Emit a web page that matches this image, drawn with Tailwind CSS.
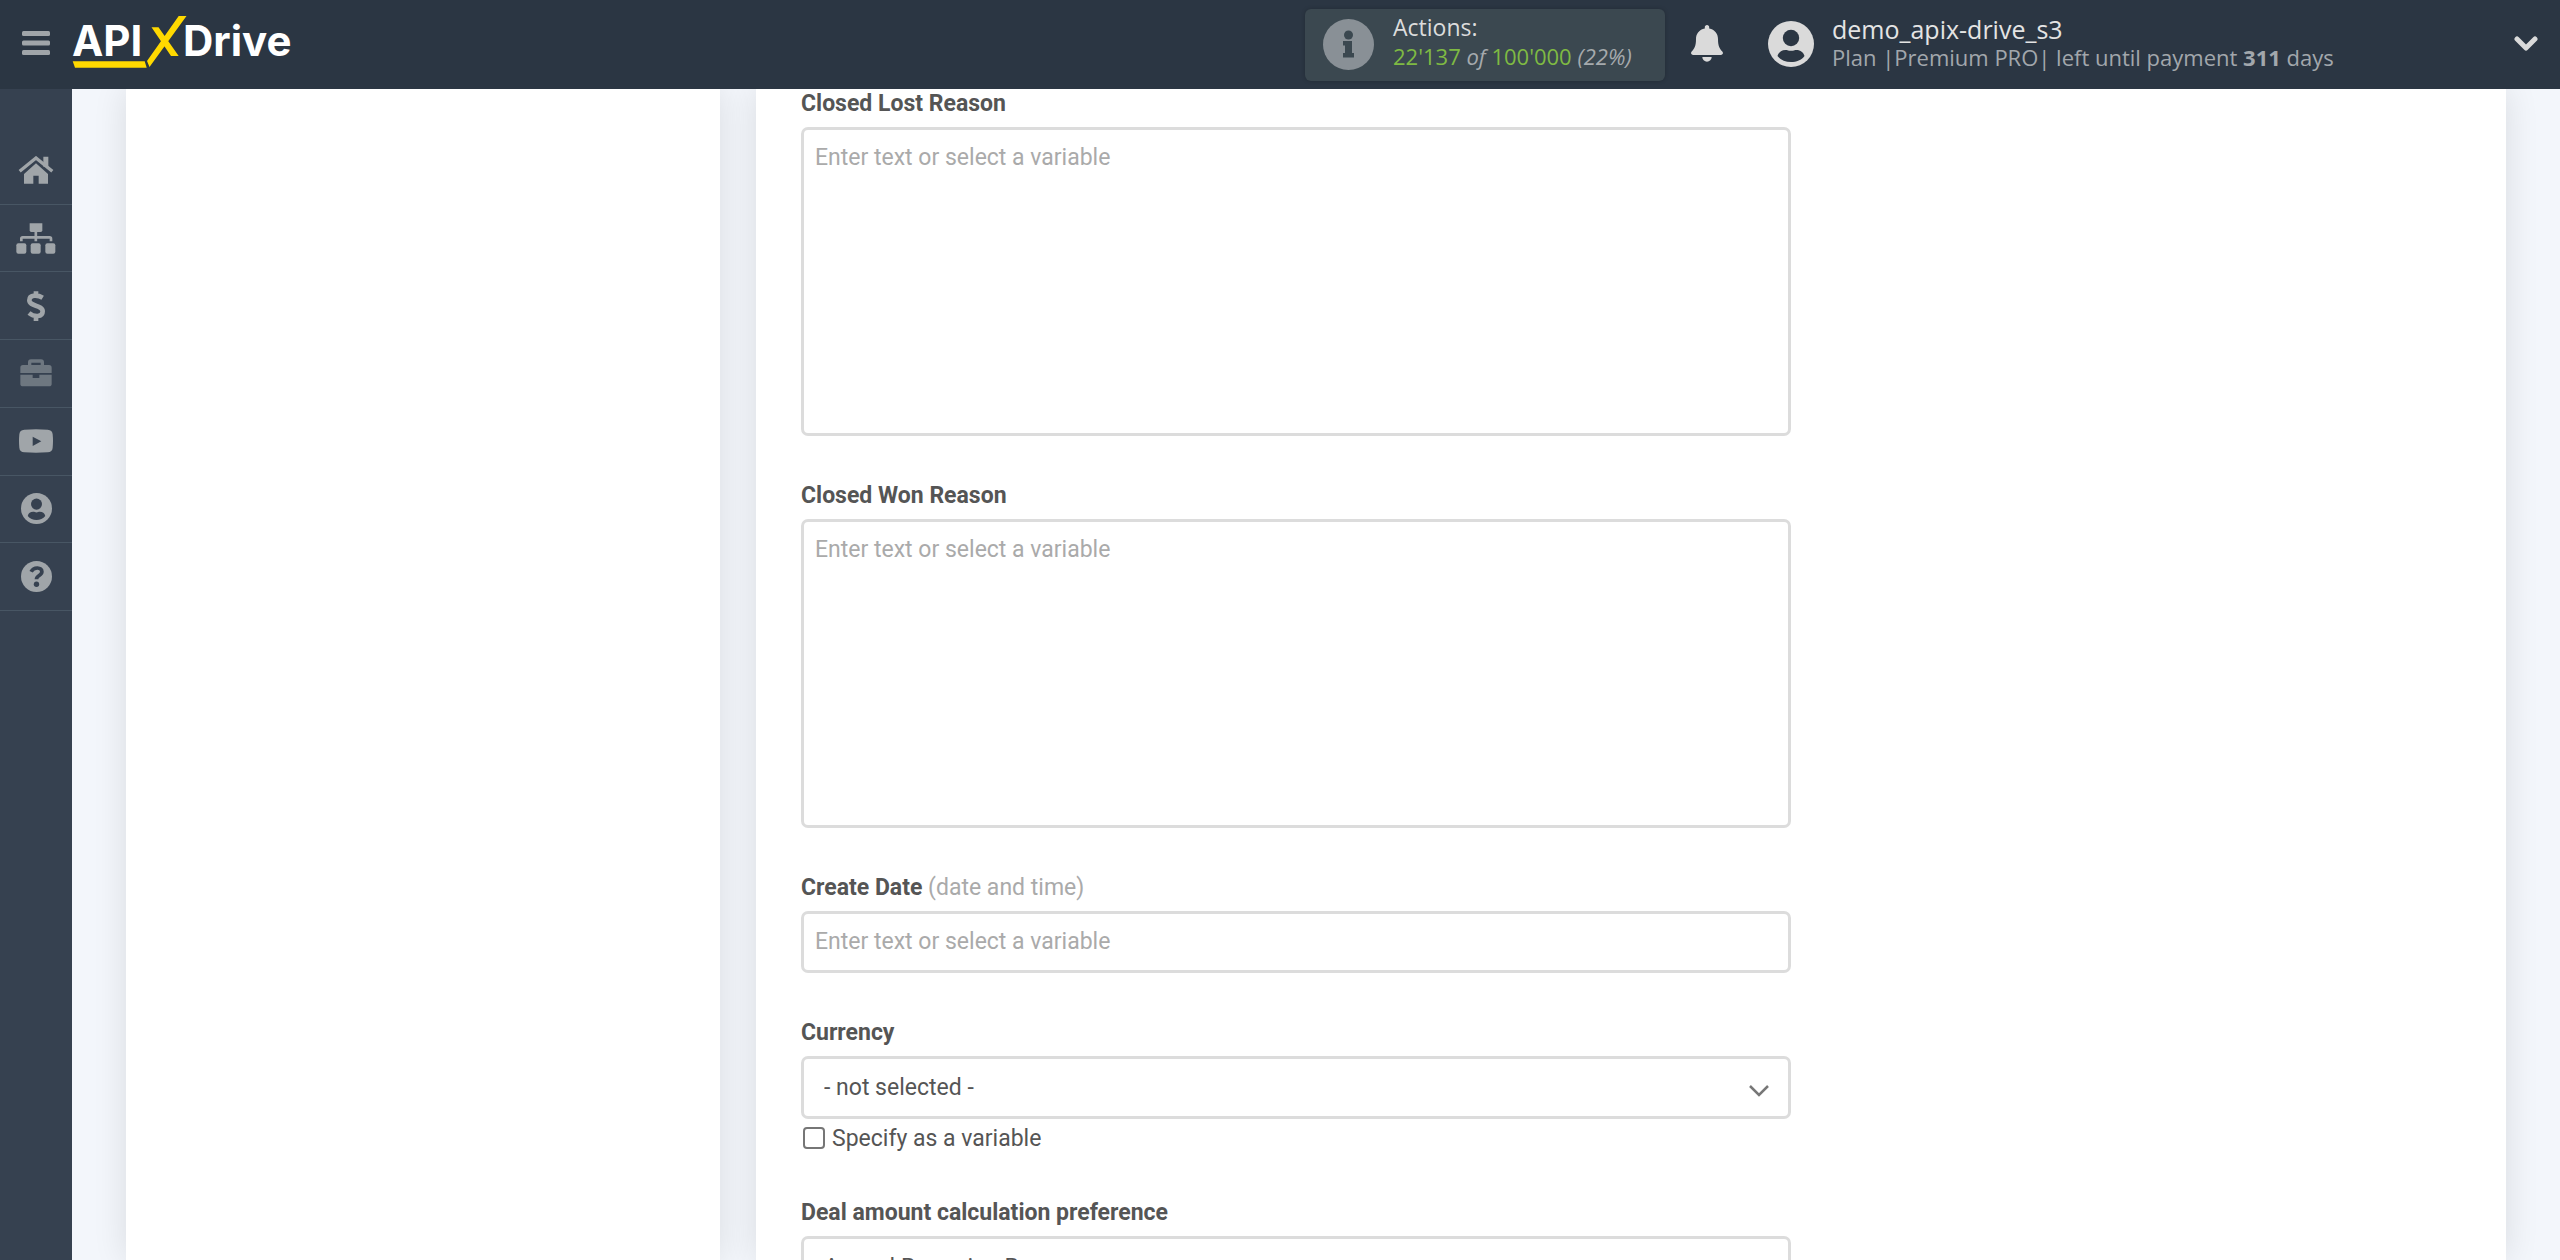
<!DOCTYPE html>
<html lang="en">
<head>
<meta charset="utf-8">
<meta name="viewport" content="width=device-width, initial-scale=1">
<title>APIXDrive</title>
<script src="https://cdn.jsdelivr.net/npm/@tailwindcss/browser@4"></script>
</head>
<body class="flex h-screen flex-col overflow-hidden bg-[#f3f6fb] font-['Roboto',sans-serif] text-[23px] leading-7 text-[#555]">

<header class="z-10 flex h-[89px] flex-none items-center bg-[#2b3643] font-['Open_Sans',sans-serif]">
  <button type="button" aria-label="Toggle menu" class="flex w-[72px] flex-none justify-center pb-1">
    <svg class="h-6 w-7" viewBox="0 0 28 24" fill="#a0a5a9"><rect width="28" height="5" rx="1.5"/><rect y="9.500" width="28" height="5" rx="1.5"/><rect y="19" width="28" height="5" rx="1.5"/></svg>
  </button>
  <a href="#" aria-label="APIXDrive" class="flex-none">
    <svg class="h-[89px] w-[228px]" viewBox="72 0 228 89">
      <g fill="#fff" font-family="Inter, sans-serif" font-weight="700" font-size="42">
        <text x="72" y="56">API</text><text x="183" y="56">Drive</text>
      </g>
      <path fill="#ffd900" d="M72.700 61.300H144.700L146.700 67.700H75ZM178.700 16H186.500L149.500 67L147 61ZM151.500 27.300H158.500L178.700 56H171Z"/>
    </svg>
  </a>

  <div class="ml-auto flex h-[72px] w-[360px] flex-none items-center gap-[19px] rounded-md bg-[#3b4850] pl-[18px] shadow-[0_0_4px_rgba(0,0,0,0.2)]">
    <svg class="size-[51px] flex-none" viewBox="0 0 51 51"><circle cx="25.500" cy="25.500" r="25.500" fill="#899096"/><g fill="#3b4850"><circle cx="25.500" cy="16" r="4.500"/><path d="M21 22h8v12h2v4.500H20V34h2v-7.500h-2V22z"/></g></svg>
    <div class="pb-[6px]">
      <div class="text-[23px] leading-[29px] text-[#dcdcdc]">Actions:</div>
      <div class="whitespace-nowrap text-[22px] leading-[29px] text-[#7fba43]">22'137 <i class="text-[#a5aaad]">of</i> 100'000 <i class="text-[#a5aaad]">(22%)</i></div>
    </div>
  </div>
  <button type="button" aria-label="Notifications" class="ml-[26px] flex-none pb-[2px]">
    <svg class="h-[37px] w-8" viewBox="0 0 32 37" fill="#dadada"><path d="M16 0c1.300 0 2.200 1 2.200 2.200v1.300c5.600 1 8.800 5.400 8.800 10.500 0 7 1.500 9.500 4.300 12.500 1.300 1.500.6 3.500-1.500 3.500H2.200C.1 30-.6 28 .7 26.500 3.500 23.500 5 21 5 14 5 8.900 8.200 4.500 13.800 3.500V2.200C13.800 1 14.700 0 16 0zM11.300 32h9.400a4.700 4.700 0 0 1-9.400 0z"/></svg>
  </button>
  <div class="ml-[45px] flex w-[792px] flex-none items-center gap-[18px] pr-[22px] pb-[2px]">
    <svg class="size-[46px] flex-none" viewBox="0 0 46 46"><circle cx="23" cy="23" r="23" fill="#dadada"/><circle cx="23" cy="17" r="8.200" fill="#2b3643"/><path fill="#2b3643" d="M9.500 35c1-3.500 4-6 8-6 2 0 3 .8 5.500.8s3.500-.8 5.500-.8c4 0 7 2.500 8 6-3 4-8 6-13.500 6s-10.500-2-13.500-6z"/></svg>
    <div>
      <div class="text-[25px] leading-[28px] text-[#e4e4e4]">demo_apix-drive_s3</div>
      <div class="whitespace-nowrap text-[22px] leading-[29px] text-[#a2a7ac]">Plan |Premium PRO| left until payment <b>311</b> days</div>
    </div>
    <button type="button" aria-label="Account menu" class="ml-auto">
      <svg class="h-4 w-6" viewBox="0 0 24 16" fill="none" stroke="#dadada" stroke-width="5" stroke-linecap="round" stroke-linejoin="round"><path d="M3 3l9 9 9-9"/></svg>
    </button>
  </div>
</header>

<div class="flex min-h-0 flex-1">
  <nav class="w-[72px] flex-none bg-[#364150] pt-12">
    <div class="grid h-[474px] auto-rows-fr *:flex *:items-center *:justify-center *:border-b-1 *:border-[#485664]">
      <a href="#" aria-label="Home"><svg class="h-[28px] w-[36px]" viewBox="55 79 108 84" fill="#a0a5a9"><path d="M131 81h15v30h-15zM109 101l36 32v29h-28v-24h-16v24H73v-29z"/><path d="M60 125l49-40 49 40" fill="none" stroke="#a0a5a9" stroke-width="10"/></svg></a>
      <a href="#" aria-label="Connections"><svg class="h-[31px] w-10" viewBox="50 278 120 93" fill="#a0a5a9"><path d="M91 279h38v21q0 5-5 5H96q-5 0-5-5z"/><rect x="51" y="339" width="30" height="31" rx="6"/><rect x="94" y="339" width="30" height="31" rx="6"/><rect x="138" y="339" width="30" height="31" rx="6"/><path d="M66 333v-8q0-4 4-4h81q4 0 4 4v8M109.500 303v30" fill="none" stroke="#a0a5a9" stroke-width="8"/></svg></a>
      <a href="#" aria-label="Billing"><svg class="h-[30px] w-5" viewBox="79 483 60 90" fill="none" stroke="#a0a5a9" stroke-width="14"><path d="M129 503C116 495 89 492 89 511c0 19 40 13 40 33 0 18-25 18-41 5M109 484v12M109 559v14"/></svg></a>
      <a href="#" aria-label="Services"><svg class="h-[28px] w-8" viewBox="61 686 96 84" fill="#6e7780"><path d="M85 704v-8q0-9 9-9h30q9 0 9 9v8h15q8 0 8 8v16H62v-16q0-8 8-8zm10 0h28v-7H95zM62 733h37v10h20v-10h37v28q0 7-8 7H70q-8 0-8-7z"/></svg></a>
      <a href="#" aria-label="Video"><svg class="h-6 w-[34px]" viewBox="57 145 102 72"><path fill="#a0a5a9" d="M73 147q35-2 70 0 14 1 15 14 2 20 0 40-1 13-15 14-35 2-70 0-14-1-15-14-2-20 0-40 1-13 15-14z"/><path fill="#364150" d="M98 168l26 14-26 14z"/></svg></a>
      <a href="#" aria-label="Profile"><svg class="size-[31px]" viewBox="0 0 46 46"><circle cx="23" cy="23" r="23" fill="#a0a5a9"/><circle cx="23" cy="16.500" r="8.200" fill="#364150"/><path fill="#364150" d="M10 34c1-4 4-6 8-6 2 0 3 .8 5 .8s3-.8 5-.8c4 0 7 2 8 6-3 4-8 6-13 6s-10-2-13-6z"/></svg></a>
      <a href="#" aria-label="Help"><svg class="size-[31px]" viewBox="0 0 46 46"><circle cx="23" cy="23" r="23" fill="#a0a5a9"/><path d="M15 16c4-8 16-7 16 0 0 6-8 5-8 11" fill="none" stroke="#364150" stroke-width="5.500"/><circle cx="23" cy="34.500" r="4" fill="#364150"/></svg></a>
    </div>
  </nav>

  <main class="flex min-w-0 flex-1 gap-9 px-[54px]">
    <aside class="w-[calc(25%-1px)] flex-none bg-white shadow-[0_0_32px_rgba(0,0,0,0.11)]"></aside>
    <form class="min-w-0 flex-1 bg-white px-[45px] shadow-[0_0_32px_rgba(0,0,0,0.11)]">
      <div class="flex w-[990px] max-w-full flex-col gap-[45px] *:flex *:flex-col">
        <div>
          <label for="lost" class="pt-px pb-[9px] font-bold">Closed Lost Reason</label>
          <textarea id="lost" placeholder="Enter text or select a variable" class="h-[309px] resize-none rounded-[7px] border-3 border-[#dcdcdc] px-[11px] py-[14px] placeholder:text-[#aaa]"></textarea>
        </div>
        <div>
          <label for="won" class="pt-px pb-[9px] font-bold">Closed Won Reason</label>
          <textarea id="won" placeholder="Enter text or select a variable" class="h-[309px] resize-none rounded-[7px] border-3 border-[#dcdcdc] px-[11px] py-[14px] placeholder:text-[#aaa]"></textarea>
        </div>
        <div>
          <label for="date" class="pt-px pb-[9px] font-bold">Create Date <span class="font-normal text-[#aaa]">(date and time)</span></label>
          <input id="date" type="text" placeholder="Enter text or select a variable" class="h-[62px] rounded-[7px] border-3 border-[#dcdcdc] px-[11px] pb-[2px] placeholder:text-[#aaa]">
        </div>
        <div>
          <label for="currency" class="pt-px pb-[9px] font-bold">Currency</label>
          <div class="relative">
            <select id="currency" class="h-[63px] w-full appearance-none rounded-[7px] border-3 border-[#dcdcdc] bg-white px-5"><option>- not selected -</option></select>
            <svg class="pointer-events-none absolute top-[29px] right-[22px] h-3 w-5" viewBox="0 0 20 12" fill="none" stroke="#777" stroke-width="2.500"><path d="M1 1l9 9 9-9"/></svg>
          </div>
          <label class="mt-[6px] flex items-center gap-[7px] pl-[2px]"><input type="checkbox" class="mb-[3px] size-[22px] appearance-none rounded-[4px] border-2 border-[#767676] bg-white">Specify as a variable</label>
        </div>
        <div>
          <label for="amount" class="pt-px pb-[9px] font-bold">Deal amount calculation preference</label>
          <select id="amount" class="h-[63px] w-full appearance-none rounded-[7px] border-3 border-[#dcdcdc] bg-white px-5"><option>Annual Recurring Revenue</option></select>
        </div>
      </div>
    </form>
  </main>
</div>
</body>
</html>
